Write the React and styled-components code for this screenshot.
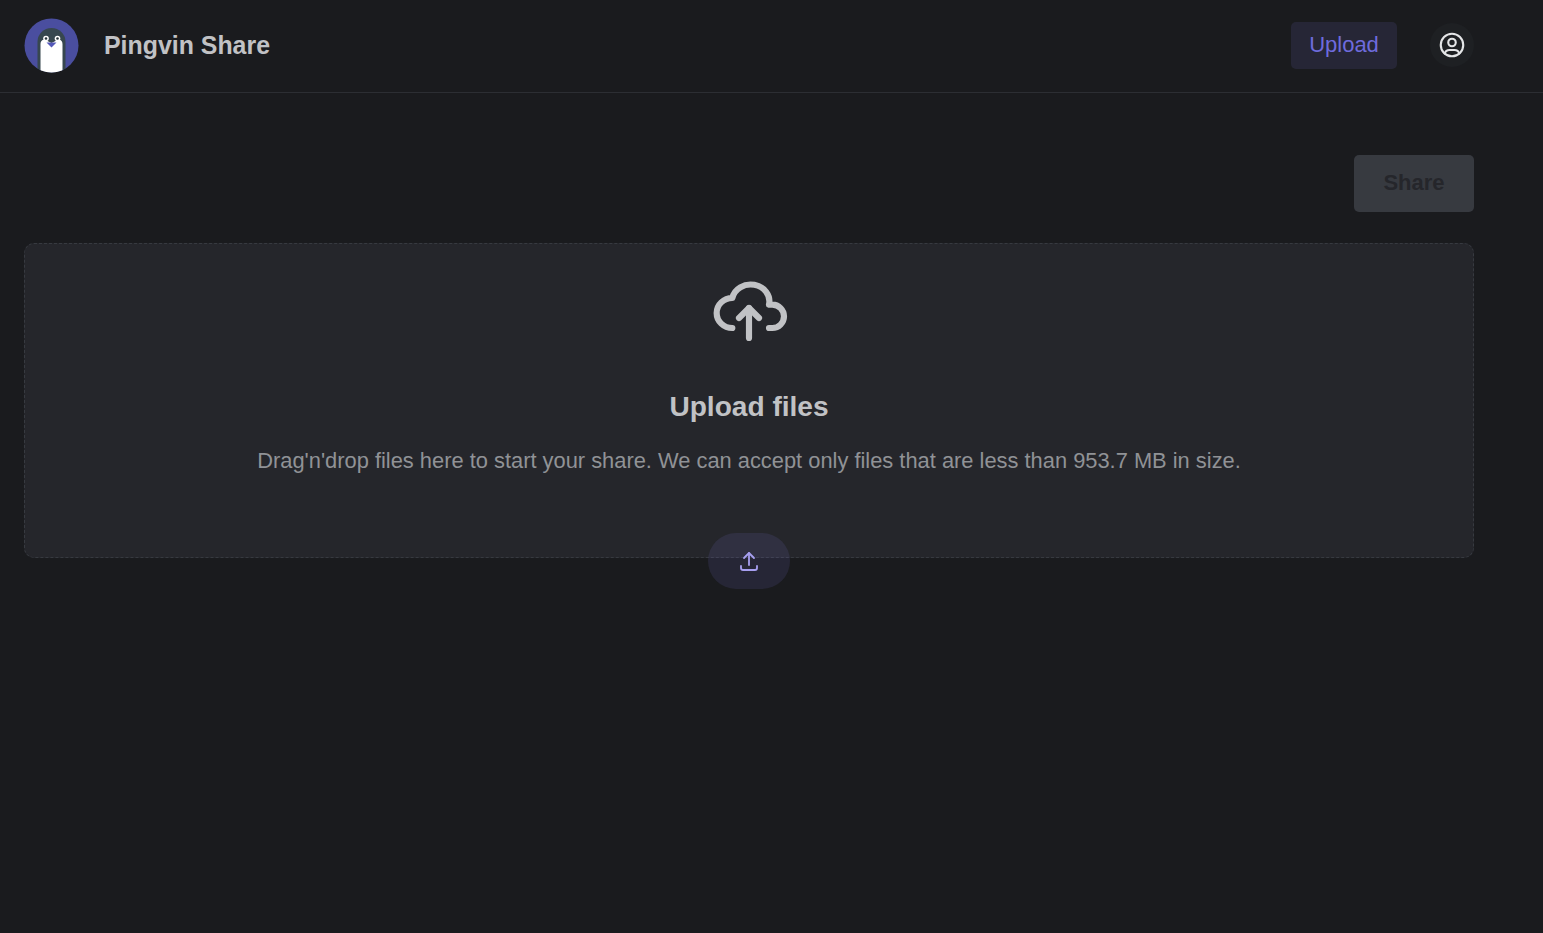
import React from 'react';
import styled, { createGlobalStyle } from 'styled-components';

const GlobalStyle = createGlobalStyle`
  html, body {
    margin: 0;
    padding: 0;
    height: 100%;
    background-color: #1a1b1e;
    font-family: "Liberation Sans", Arial, sans-serif;
  }
`;

const Page = styled.div`
  min-height: 933px;
  background-color: #1a1b1e;
  color: #c1c2c5;
`;

const Header = styled.header`
  height: 91px;
  box-sizing: content-box;
  display: flex;
  align-items: center;
  justify-content: space-between;
  padding: 0 69px 1px 24px;
  border-bottom: 1px solid #2c2e33;
`;

const Brand = styled.div`
  display: flex;
  align-items: center;
  gap: 25px;
`;

const BrandName = styled.span`
  font-size: 24.9px;
  font-weight: 700;
  color: #c1c2c5;
`;

const Nav = styled.nav`
  display: flex;
  align-items: center;
  gap: 33px;
`;

const UploadLink = styled.a`
  width: 106px;
  height: 47px;
  box-sizing: border-box;
  padding-bottom: 2px;
  display: flex;
  align-items: center;
  justify-content: center;
  border-radius: 5px;
  background-color: rgba(130, 120, 220, 0.125);
  color: #6e6bdc;
  font-size: 22px;
`;

const UserButton = styled.button`
  width: 44px;
  height: 44px;
  margin-bottom: 1px;
  padding: 0;
  display: flex;
  align-items: center;
  justify-content: center;
  border: none;
  border-radius: 50%;
  background-color: #1e2023;
  color: #e4e5e7;
`;

const Main = styled.main`
  padding: 62px 69px 0 24px;
`;

const Actions = styled.div`
  display: flex;
  justify-content: flex-end;
  margin-bottom: 31px;
`;

const ShareButton = styled.button`
  width: 120px;
  height: 57px;
  padding: 0 0 2px;
  border: none;
  border-radius: 5px;
  background-color: #373a40;
  color: #25262b;
  font-family: inherit;
  font-size: 22px;
  font-weight: 700;
`;

const Dropzone = styled.section`
  position: relative;
  height: 315px;
  box-sizing: border-box;
  display: flex;
  flex-direction: column;
  align-items: center;
  padding-top: 24px;
  border: 1px dashed #373a40;
  border-radius: 10px;
  background-color: #25262b;
`;

const CloudIcon = styled.svg`
  display: block;
  margin-bottom: 41px;
  color: #c1c2c5;
`;

const Title = styled.h2`
  margin: 0 0 19px;
  font-size: 28.1px;
  line-height: 36px;
  font-weight: 700;
  color: #c1c2c5;
`;

const Hint = styled.p`
  margin: 0;
  font-size: 21.87px;
  line-height: 34px;
  color: #909296;
`;

const PickButton = styled.button`
  position: absolute;
  left: 50%;
  bottom: -32px;
  width: 82px;
  height: 56px;
  padding: 0;
  transform: translateX(-50%);
  display: flex;
  align-items: center;
  justify-content: center;
  border: none;
  border-radius: 28px;
  background-color: rgba(130, 120, 220, 0.125);
  color: #a79ff0;
`;

const Logo = () => (
  <svg width="55" height="55" viewBox="0 0 55 55">
    <defs>
      <clipPath id="logo-clip">
        <circle cx="27.500" cy="27.500" r="27" />
      </clipPath>
    </defs>
    <circle cx="27.500" cy="27.500" r="27" fill="#4a4e9f" />
    <g clipPath="url(#logo-clip)">
      <path d="M13.500 55V24a14 14 0 0 1 28 0v31z" fill="#37474f" />
      <path d="M16.500 55V26c0-3 2-5 5-4l6 3 6-3c3-1 5 1 5 4v29z" fill="#fff" />
      <circle cx="22" cy="20.500" r="2.800" fill="#fff" />
      <circle cx="33.500" cy="20.500" r="2.800" fill="#fff" />
      <circle cx="22" cy="20.500" r="1.300" fill="#263238" />
      <circle cx="33.500" cy="20.500" r="1.300" fill="#263238" />
      <path d="M22.500 24.500h10l-5 5z" fill="#5458b8" />
    </g>
  </svg>
);

const UserIcon = () => (
  <svg width="30" height="30" viewBox="0 0 24 24" fill="none" stroke="currentColor" strokeWidth="1.7" strokeLinecap="round" strokeLinejoin="round">
    <circle cx="12" cy="12" r="9" />
    <circle cx="12" cy="10" r="3" />
    <path d="M6.168 18.849a4 4 0 0 1 3.832 -2.849h4a4 4 0 0 1 3.834 2.855" />
  </svg>
);

const UploadIcon = () => (
  <svg width="24" height="24" viewBox="0 0 24 24" fill="none" stroke="currentColor" strokeWidth="1.8" strokeLinecap="round" strokeLinejoin="round">
    <path d="M4 17v2a2 2 0 0 0 2 2h12a2 2 0 0 0 2 -2v-2" />
    <path d="M7 9l5 -5l5 5" />
    <path d="M12 4v12" />
  </svg>
);

const App = () => (
  <Page>
    <GlobalStyle />
    <Header>
      <Brand>
        <Logo />
        <BrandName>Pingvin Share</BrandName>
      </Brand>
      <Nav>
        <UploadLink>Upload</UploadLink>
        <UserButton>
          <UserIcon />
        </UserButton>
      </Nav>
    </Header>
    <Main>
      <Actions>
        <ShareButton disabled>Share</ShareButton>
      </Actions>
      <Dropzone>
        <CloudIcon width="80" height="80" viewBox="0 0 24 24" fill="none" stroke="currentColor" strokeWidth="1.85" strokeLinecap="round" strokeLinejoin="round">
          <path d="M7 18a4.600 4.400 0 0 1 0 -9a5 4.500 0 0 1 11 2h1a3.500 3.500 0 0 1 0 7h-1" />
          <path d="M9 15l3 -3l3 3" />
          <path d="M12 12v9" />
        </CloudIcon>
        <Title>Upload files</Title>
        <Hint>Drag&apos;n&apos;drop files here to start your share. We can accept only files that are less than 953.7 MB in size.</Hint>
        <PickButton>
          <UploadIcon />
        </PickButton>
      </Dropzone>
    </Main>
  </Page>
);

export default App;
